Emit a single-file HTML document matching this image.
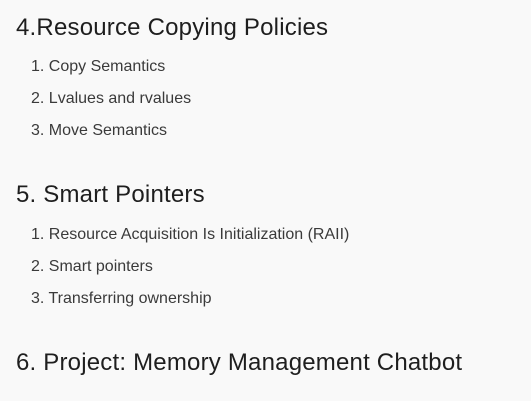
<!DOCTYPE html>
<html><head><meta charset="utf-8"><style>
html,body{margin:0;padding:0;width:531px;height:401px;background:#f9f9f9;overflow:hidden}
body{position:relative;font-family:"Liberation Sans",sans-serif}
.h{position:absolute;left:16px;font-size:24px;letter-spacing:0.2px;color:#1e1e1e;line-height:30px;height:30px;white-space:nowrap}
.i{position:absolute;left:31px;font-size:16px;color:#3a3a3a;line-height:20px;height:20px;white-space:nowrap}
</style></head><body>
<div class="h" style="top:13px">4.Resource Copying Policies</div>
<div class="i" style="top:57px">1. Copy Semantics</div>
<div class="i" style="top:89px">2. Lvalues and rvalues</div>
<div class="i" style="top:121px">3. Move Semantics</div>
<div class="h" style="top:180px">5. Smart Pointers</div>
<div class="i" style="top:225px">1. Resource Acquisition Is Initialization (RAII)</div>
<div class="i" style="top:257px">2. Smart pointers</div>
<div class="i" style="top:289px">3. Transferring ownership</div>
<div class="h" style="top:348px">6. Project: Memory Management Chatbot</div>
</body></html>
